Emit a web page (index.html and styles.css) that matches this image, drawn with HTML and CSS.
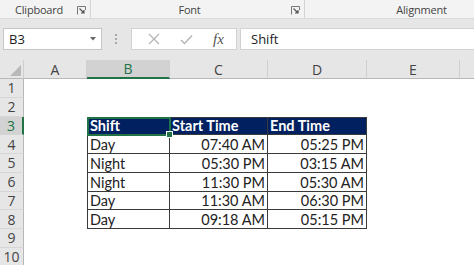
FILE: index.html
```html
<!DOCTYPE html>
<html lang="en">
    <head>
        <meta charset="UTF-8">
        <title>Shift times</title>
        <link rel="stylesheet" href="styles.css">
    </head>
    <body>
        <!-- ribbon group labels -->
        <div class="ribbon">
            <div class="grp grpClip">
                <span class="grpName">Clipboard</span>
                <svg class="launcher" width="9" height="9" viewBox="0 0 9 9"><path d="M0.5 8.5V0.5H8.5V4" fill="none" stroke="#777"/><path d="M2.5 2.5L7 7M7 4V7H4" fill="none" stroke="#555" stroke-width="1.2"/></svg>
            </div>
            <div class="grp grpFont">
                <span class="grpName">Font</span>
                <svg class="launcher" width="9" height="9" viewBox="0 0 9 9"><path d="M0.5 8.5V0.5H8.5V4" fill="none" stroke="#777"/><path d="M2.5 2.5L7 7M7 4V7H4" fill="none" stroke="#555" stroke-width="1.2"/></svg>
            </div>
            <div class="grp grpAlign">
                <span class="grpName">Alignment</span>
            </div>
        </div>
        <!-- name box and formula bar -->
        <div class="fbar">
            <div class="nameBox">
                <span>B3</span>
                <svg width="6" height="4" viewBox="0 0 6 4"><path d="M0 0H6L3 3.5Z" fill="#666"/></svg>
            </div>
            <div class="dots"><i></i><i></i><i></i></div>
            <div class="fbButtons">
                <svg width="12" height="12" viewBox="0 0 12 12"><path d="M1 1L11 11M11 1L1 11" stroke="#b4b4b4" stroke-width="1.2" fill="none"/></svg>
                <svg width="13" height="11" viewBox="0 0 13 11"><path d="M1 6L4.5 9.5L12 1.5" stroke="#b4b4b4" stroke-width="1.4" fill="none"/></svg>
                <span class="fx">fx</span>
            </div>
            <div class="fInput">Shift</div>
        </div>
        <!-- worksheet -->
        <div class="sheet">
            <div class="corner"><svg width="11" height="11" viewBox="0 0 11 11"><path d="M11 0V11H0Z" fill="#b9b9b9"/></svg></div>
            <div class="colHead">A</div>
            <div class="colHead colSel">B</div>
            <div class="colHead">C</div>
            <div class="colHead">D</div>
            <div class="colHead">E</div>
            <div class="colHead colLast"></div>

            <div class="rowHead">1</div><div></div><div></div><div></div><div></div><div></div><div></div>
            <div class="rowHead">2</div><div></div><div></div><div></div><div></div><div></div><div></div>

            <div class="rowHead rowSel">3</div><div></div>
            <div class="cell th first top sel">Shift</div>
            <div class="cell th top">Start Time</div>
            <div class="cell th top">End Time</div>
            <div></div><div></div>

            <div class="rowHead">4</div><div></div>
            <div class="cell first">Day</div><div class="cell num">07:40 AM</div><div class="cell num">05:25 PM</div>
            <div></div><div></div>

            <div class="rowHead">5</div><div></div>
            <div class="cell first">Night</div><div class="cell num">05:30 PM</div><div class="cell num">03:15 AM</div>
            <div></div><div></div>

            <div class="rowHead">6</div><div></div>
            <div class="cell first">Night</div><div class="cell num">11:30 PM</div><div class="cell num">05:30 AM</div>
            <div></div><div></div>

            <div class="rowHead">7</div><div></div>
            <div class="cell first">Day</div><div class="cell num">11:30 AM</div><div class="cell num">06:30 PM</div>
            <div></div><div></div>

            <div class="rowHead">8</div><div></div>
            <div class="cell first">Day</div><div class="cell num">09:18 AM</div><div class="cell num">05:15 PM</div>
            <div></div><div></div>

            <div class="rowHead">9</div><div></div><div></div><div></div><div></div><div></div><div></div>
            <div class="rowHead">10</div><div></div><div></div><div></div><div></div><div></div><div></div>
        </div>
    </body>
</html>
```

FILE: styles.css
```css
*{
    margin: 0px;
    padding: 0px;
    box-sizing: border-box;
}
body{
    width: 474px;
    height: 265px;
    overflow: hidden;
    background-color: #e6e6e6;
    font-family: "Open Sans", "Noto Sans", sans-serif;
    color: #444;
}
.ribbon{
    display: flex;
    height: 19px;
    background-color: #f3f3f3;
    border-bottom: 1px solid #dadada;
}
.grp{
    display: flex;
    align-items: center;
    justify-content: center;
    position: relative;
    height: 18px;
    border-right: 1px solid #d4d4d4;
}
.grpName{
    font-size: 11px;
    letter-spacing: -0.2px;
    color: #444;
}
.grpClip{
    width: 91px;
    justify-content: flex-start;
}
.grpClip .grpName{
    margin-left: 15px;
}
.grpFont{
    width: 214px;
    padding-right: 16px;
}
.grpAlign{
    flex: 1;
    border-right: none;
    padding-left: 64px;
}
.launcher{
    position: absolute;
    right: 4px;
    top: 6px;
}
.fbar{
    display: flex;
    align-items: center;
    height: 41px;
    padding-top: 9px;
    padding-bottom: 10px;
}
.nameBox{
    display: flex;
    align-items: center;
    justify-content: space-between;
    width: 99px;
    height: 22px;
    margin-left: 3px;
    padding-left: 5px;
    padding-right: 5px;
    background-color: white;
    border: 1px solid #c6c6c6;
    font-size: 13px;
    color: #222;
}
.dots{
    display: flex;
    flex-direction: column;
    gap: 2px;
    width: 28px;
    align-items: center;
}
.dots i{
    width: 2px;
    height: 2px;
    background-color: #a9a9a9;
}
.fbButtons{
    display: flex;
    align-items: center;
    justify-content: space-around;
    width: 106px;
    height: 22px;
    margin-left: 1px;
    padding-left: 6px;
    padding-right: 2px;
    background-color: white;
    border: 1px solid #d2d2d2;
}
.fx{
    font-family: "Liberation Serif", serif;
    font-style: italic;
    font-size: 15px;
    color: #555;
}
.fInput{
    flex: 1;
    height: 22px;
    margin-left: 3px;
    padding-left: 10px;
    line-height: 20px;
    background-color: white;
    border: 1px solid #d2d2d2;
    border-right: none;
    font-size: 13px;
    color: #222;
}
.sheet{
    display: grid;
    grid-template-columns: 24px 63px 83px 98px 99px 93px 1fr;
    grid-template-rows: 19px;
    grid-auto-rows: 18.75px;
    background-color: white;
}
.corner{
    display: flex;
    align-items: flex-end;
    justify-content: flex-end;
    padding: 2px;
    background-color: #e6e6e6;
    border-right: 1px solid #cfcfcf;
    border-bottom: 1px solid #b8b8b8;
}
.colHead{
    display: flex;
    align-items: center;
    justify-content: center;
    background-color: #e6e6e6;
    border-right: 1px solid #cfcfcf;
    border-bottom: 1px solid #b8b8b8;
    font-size: 14px;
    color: #444;
}
.colSel{
    background-color: #d2d2d2;
    border-bottom: 2px solid #217346;
    color: #217346;
}
.colLast{
    border-right: none;
}
.rowHead{
    display: flex;
    align-items: center;
    justify-content: center;
    background-color: #e6e6e6;
    border-right: 1px solid #b8b8b8;
    border-bottom: 1px solid #d6d6d6;
    font-size: 14px;
    color: #444;
}
.rowSel{
    background-color: #d2d2d2;
    border-right: 2px solid #217346;
    color: #217346;
}
.cell{
    display: flex;
    align-items: flex-end;
    padding-left: 2px;
    padding-right: 2px;
    border-right: 1px solid #3a3a3a;
    border-bottom: 1px solid #3a3a3a;
    font-family: "Lato", sans-serif;
    font-size: 14.5px;
    line-height: 17px;
    color: #222;
}
.first{
    border-left: 1px solid #3a3a3a;
}
.top{
    border-top: 1px solid #3a3a3a;
}
.num{
    justify-content: flex-end;
}
.th{
    background-color: #002060;
    color: white;
    font-weight: bold;
}
.sel{
    position: relative;
}
.sel::after{
    content: "";
    position: absolute;
    left: -1px;
    top: -1px;
    right: -2px;
    bottom: -2px;
    border: 2px solid #217346;
}
.sel::before{
    content: "";
    position: absolute;
    right: -4px;
    bottom: -4px;
    width: 5px;
    height: 5px;
    background-color: #217346;
    border: 1px solid white;
    z-index: 1;
}
```
